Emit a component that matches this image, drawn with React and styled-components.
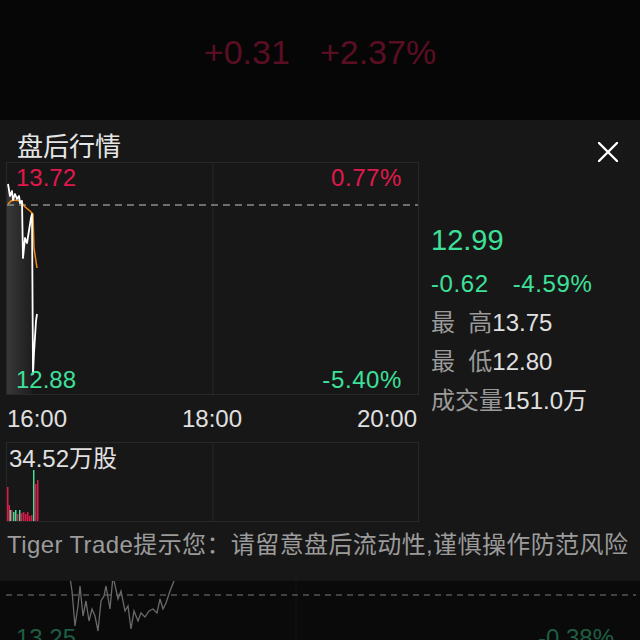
import React from "react";
import styled, { createGlobalStyle } from "styled-components";

const RED = "#e0194c";
const GREEN = "#3ee09a";

const GlobalStyle = createGlobalStyle`
  html, body {
    margin: 0;
    padding: 0;
    background: #060606;
  }
  body {
    font-family: "Liberation Sans", "Noto Sans CJK SC", sans-serif;
  }
`;

const Screen = styled.div`
  width: 640px;
  height: 640px;
  overflow: hidden;
  display: flex;
  flex-direction: column;
  background: #060606;
`;

const QuoteTop = styled.div`
  flex-shrink: 0;
  height: 120px;
  box-sizing: border-box;
  padding-top: 32px;
  display: flex;
  justify-content: center;
  gap: 30px;
  font-size: 34px;
  line-height: 40px;
  color: #5a0e23;
`;

const Sheet = styled.div`
  flex-shrink: 0;
  height: 461px;
  background: #171717;
  display: flex;
  flex-direction: column;
`;

const SheetHeader = styled.div`
  height: 42px;
  display: flex;
  justify-content: space-between;
  align-items: flex-start;
  padding: 0 22px 0 17px;
`;

const Title = styled.div`
  margin-top: 10px;
  font-size: 26px;
  line-height: 34px;
  color: #e6e6e6;
`;

const CloseButton = styled.button`
  margin-top: 22px;
  width: 20px;
  height: 20px;
  padding: 0;
  border: 0;
  background: none;
  display: flex;
`;

const Body = styled.div`
  display: flex;
  padding-left: 6px;
`;

const LeftColumn = styled.div`
  width: 413px;
  display: flex;
  flex-direction: column;
`;

const ChartBox = styled.div`
  position: relative;
  height: ${(p) => p.$h}px;
  box-sizing: border-box;
  border: 1px solid #282828;
  display: flex;
  flex-direction: column;
  justify-content: ${(p) => (p.$split ? "space-between" : "flex-start")};
`;

const ChartSvg = styled.svg`
  position: absolute;
  left: 0;
  top: 0;
  width: 100%;
  height: 100%;
`;

const LabelRow = styled.div`
  position: relative;
  display: flex;
  justify-content: space-between;
  padding: 1px 16px 0 9px;
  font-size: 24px;
  line-height: 28px;
  color: ${(p) => p.$color};

  & > span:last-child {
    letter-spacing: 0.6px;
  }
`;

const VolumeLabel = styled.div`
  position: relative;
  padding: 2px 0 0 2px;
  font-size: 24px;
  line-height: 28px;
  color: #e0e0e0;
`;

const TimeAxis = styled.div`
  height: 47px;
  display: flex;
  justify-content: space-between;
  align-items: center;
  padding: 0 2px 0 1px;
  font-size: 24px;
  color: #e0e0e0;
`;

const InfoColumn = styled.div`
  margin-left: 12px;
  padding-top: 54px;
  display: flex;
  flex-direction: column;
`;

const LastPrice = styled.div`
  font-size: 29px;
  line-height: 48px;
  color: ${GREEN};
`;

const InfoRow = styled.div`
  display: flex;
  gap: ${(p) => p.$gap || 0}px;
  font-size: 24px;
  line-height: 39px;
  color: ${(p) => p.$color || "#e0e0e0"};
  letter-spacing: ${(p) => p.$spacing || 0}px;
  white-space: pre;
`;

const InfoLabel = styled.span`
  color: #9a9a9a;
`;

const Notice = styled.div`
  margin-top: 9px;
  padding-left: 7px;
  font-size: 24px;
  line-height: 28px;
  letter-spacing: 0.4px;
  color: #9b9b9b;
  white-space: nowrap;
`;

const Backdrop = styled.div`
  position: relative;
  flex: 1;
  min-height: 0;
  overflow: hidden;
  background: #0a0a0a;
  display: flex;
  justify-content: space-between;
  padding: 43px 26px 0 16px;
  font-size: 24px;
  line-height: 28px;
  color: #1d5e43;
`;

const BackdropLabel = styled.span`
  position: relative;
`;

const whiteLine =
  "1,21 3,33 5,28 6,37 8,31 10,36 12,33 13,40 15,38 16,95 18,75 20,80 24,55 25,51 26,211 27,190 29,158 30,151";
const avgLine = "1,41 4,38 7,37 14,38 17,43 23,48 26,51 27,85 30,105";

const volumes = [
  [0, 45, RED],
  [1.5, 63, RED],
  [2.5, 68, GREEN],
  [4, 68, RED],
  [6, 70, GREEN],
  [8, 68, GREEN],
  [10, 72, RED],
  [12, 68, GREEN],
  [14, 71, RED],
  [16, 70, RED],
  [18, 72, RED],
  [20, 70, RED],
  [22, 74, RED],
  [24, 73, RED],
  [26, 28, GREEN],
  [28, 42, RED],
  [30, 38, RED],
];

const bgLine =
  "69,-10 72,10 75,45 78,25 80,5 83,35 86,20 89,40 92,28 95,35 98,50 101,20 104,15 106,5 110,28 113,-5 118,18 121,10 125,30 128,25 131,48 134,30 138,40 141,32 145,36 149,30 153,28 157,32 160,18 163,28 166,22 170,10 174,0 178,-5";

function PriceChart() {
  return (
    <ChartSvg viewBox="0 0 411 231" preserveAspectRatio="none">
      <defs>
        <linearGradient id="shade" x1="0" y1="0" x2="1" y2="0">
          <stop offset="0" stopColor="#3c3c3c" />
          <stop offset="1" stopColor="#1e1e1e" />
        </linearGradient>
      </defs>
      <polygon
        points={`0,231 0,40 ${whiteLine.split(" ").slice(0, 14).join(" ")} 25,40 25,231`}
        fill="url(#shade)"
        opacity="0.9"
      />
      <line x1="206" y1="0" x2="206" y2="231" stroke="#282828" strokeWidth="1" />
      <line x1="0" y1="42" x2="411" y2="42" stroke="#8c8c8c" strokeWidth="1.5" strokeDasharray="7 5" />
      <polyline points={avgLine} fill="none" stroke="#f08a1c" strokeWidth="1.5" />
      <polyline points={whiteLine} fill="none" stroke="#ffffff" strokeWidth="1.8" strokeLinejoin="round" />
    </ChartSvg>
  );
}

function VolumeChart() {
  return (
    <ChartSvg viewBox="0 0 411 78" preserveAspectRatio="none">
      <line x1="206" y1="0" x2="206" y2="78" stroke="#282828" strokeWidth="1" />
      {volumes.map(([x, y, c], i) => (
        <rect key={i} x={x} y={y - 1} width="1.5" height={78 - y + 1} fill={c} />
      ))}
    </ChartSvg>
  );
}

function CloseIcon() {
  return (
    <svg width="20" height="20" viewBox="0 0 20 20">
      <path d="M1 1 L19 19 M19 1 L1 19" stroke="#ffffff" strokeWidth="2.4" strokeLinecap="round" />
    </svg>
  );
}

export default function App() {
  return (
    <Screen>
      <GlobalStyle />
      <QuoteTop>
        <span>+0.31</span>
        <span>+2.37%</span>
      </QuoteTop>
      <Sheet>
        <SheetHeader>
          <Title>盘后行情</Title>
          <CloseButton aria-label="关闭">
            <CloseIcon />
          </CloseButton>
        </SheetHeader>
        <Body>
          <LeftColumn>
            <ChartBox $h={233} $split>
              <PriceChart />
              <LabelRow $color={RED}>
                <span>13.72</span>
                <span>0.77%</span>
              </LabelRow>
              <LabelRow $color={GREEN}>
                <span>12.88</span>
                <span>-5.40%</span>
              </LabelRow>
            </ChartBox>
            <TimeAxis>
              <span>16:00</span>
              <span>18:00</span>
              <span>20:00</span>
            </TimeAxis>
            <ChartBox $h={80}>
              <VolumeChart />
              <VolumeLabel>34.52万股</VolumeLabel>
            </ChartBox>
          </LeftColumn>
          <InfoColumn>
            <LastPrice>12.99</LastPrice>
            <InfoRow $color={GREEN} $gap={24} $spacing={0.6}>
              <span>-0.62</span>
              <span>-4.59%</span>
            </InfoRow>
            <InfoRow>
              <InfoLabel>最  高</InfoLabel>
              <span>13.75</span>
            </InfoRow>
            <InfoRow>
              <InfoLabel>最  低</InfoLabel>
              <span>12.80</span>
            </InfoRow>
            <InfoRow>
              <InfoLabel>成交量</InfoLabel>
              <span>151.0万</span>
            </InfoRow>
          </InfoColumn>
        </Body>
        <Notice>Tiger Trade提示您：请留意盘后流动性,谨慎操作防范风险</Notice>
      </Sheet>
      <Backdrop>
        <ChartSvg viewBox="0 0 640 59" preserveAspectRatio="none">
          <line x1="296" y1="0" x2="296" y2="59" stroke="#141414" strokeWidth="1" />
          <line x1="6" y1="14" x2="636" y2="14" stroke="#555555" strokeWidth="1.3" strokeDasharray="6 5" />
          <polyline points={bgLine} fill="none" stroke="#6a6a6a" strokeWidth="1.3" />
        </ChartSvg>
        <BackdropLabel>13.25</BackdropLabel>
        <BackdropLabel>-0.38%</BackdropLabel>
      </Backdrop>
    </Screen>
  );
}
